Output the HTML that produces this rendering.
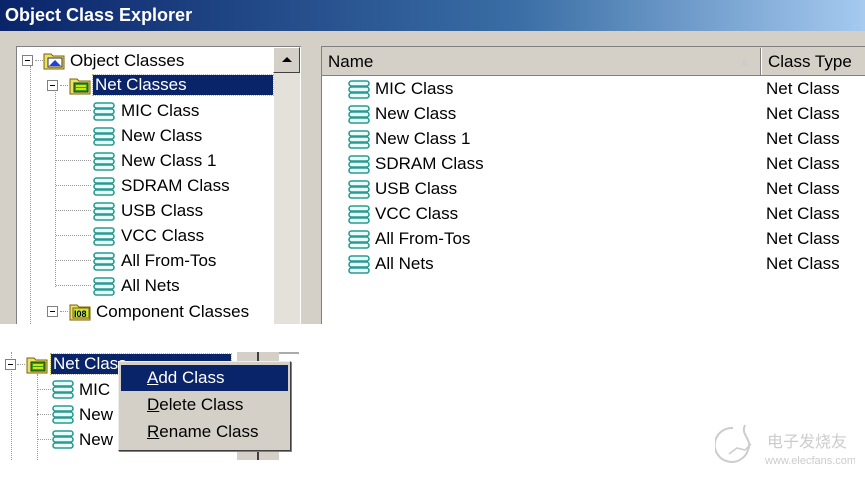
<!DOCTYPE html>
<html><head><meta charset="utf-8"><style>
*{margin:0;padding:0;box-sizing:border-box}
body{width:865px;height:477px;background:#fff;position:relative;overflow:hidden;font-family:"Liberation Sans",sans-serif;font-size:17px;color:#000}
.abs{position:absolute}
.title{left:0;top:0;width:865px;height:31px;background:linear-gradient(90deg,#0a246a 0%,#3a6ea5 60%,#a6caf0 100%);color:#fff;font-weight:bold;font-size:18px;padding:5px 0 0 5px}
.gray{left:0;top:31px;width:865px;height:293px;background:#d4d0c8}
.tree{left:16px;top:46px;width:285px;height:278px;background:#fff;border-top:1px solid #808080;border-left:1px solid #808080}
.sb{left:273px;top:47px;width:27px;height:277px;background:#e4e1db;border-left:1px solid #fff}
.sbtn{left:273px;top:47px;width:27px;height:26px;background:#d4d0c8;border:1px solid;border-color:#fff #404040 #404040 #fff}
.list{left:321px;top:46px;width:544px;height:278px;background:#fff;border-top:1px solid #808080;border-left:1px solid #808080}
.hdr{left:322px;top:47px;width:543px;height:29px;background:#d4d0c8;border-bottom:1px solid #808080}
.t{position:absolute;white-space:nowrap;line-height:20px}
.pm{position:absolute;width:11px;height:11px;border:1px solid #808080;background:#fff}
.pm:after{content:"";position:absolute;left:2px;top:4px;width:5px;height:1px;background:#000}
.dv{position:absolute;border-left:1px dotted #999}
.dh{position:absolute;border-top:1px dotted #999}
.sel{background:#0a246a;color:#fff;outline:1px dotted #c8c040}
.menu{left:118px;top:361px;width:173px;height:90px;background:#d4d0c8;border:1px solid;border-color:#eee #404040 #404040 #eee;box-shadow:1px 1px 0 #808080}
</style></head><body>
<svg width="0" height="0" style="position:absolute"><defs>
<g id="n"><rect x="1" y="1" width="20" height="5" rx="2.5" fill="#e8fbf8" stroke="#2a9a90" stroke-width="1.6"/><rect x="1" y="7" width="20" height="5" rx="2.5" fill="#e8fbf8" stroke="#2a9a90" stroke-width="1.6"/><rect x="1" y="13" width="20" height="5" rx="2.5" fill="#e8fbf8" stroke="#2a9a90" stroke-width="1.6"/></g>
<g id="f"><path d="M1 4h7l2 2h11v13H1z" fill="#e8e070" stroke="#806000"/><rect x="5" y="8" width="14" height="9" fill="#3a9a20" stroke="#104000"/><path d="M7 11h10M7 14h10" stroke="#ff0" stroke-width="1.5"/></g>
</defs></svg>
<div class="abs title">Object Class Explorer</div>
<div class="abs gray"></div>
<div class="abs tree"></div>
<div class="abs sb"></div>
<div class="abs sbtn"><div style="position:absolute;left:8px;top:9px;width:0;height:0;border-left:5px solid transparent;border-right:5px solid transparent;border-bottom:5px solid #000"></div></div>
<div class="abs list"></div>
<div class="abs hdr"><div class="t" style="left:6px;top:5px">Name</div><div class="t" style="left:416px;top:5px;color:#ccc;font-size:13px">▲</div><div style="position:absolute;left:438px;top:1px;width:2px;height:27px;border-left:1px solid #808080;border-right:1px solid #fff"></div><div class="t" style="left:446px;top:5px">Class Type</div></div>

<!-- tree top -->
<div class="dv" style="left:30px;top:66px;height:258px"></div>
<div class="dv" style="left:55px;top:92px;height:195px"></div>
<div class="pm" style="left:22px;top:55px"></div>
<div class="dh" style="left:35px;top:60px;width:8px"></div>
<svg class="abs" style="left:43px;top:50px" width="22" height="20"><path d="M1 4h7l2 2h11v13H1z" fill="#e8e070" stroke="#806000"/><rect x="5" y="8" width="14" height="9" fill="#fff" stroke="#333"/><path d="M6 16l6-6 6 6z" fill="#2040e0"/></svg>
<div class="t" style="left:70px;top:51px">Object Classes</div>
<div class="pm" style="left:47px;top:80px"></div>
<div class="dh" style="left:60px;top:85px;width:8px"></div>
<svg class="abs" style="left:69px;top:75px" width="22" height="20"><use href="#f"/></svg>
<div class="t sel" style="left:93px;top:75px;width:180px;padding-left:2px">Net Classes</div>
<div class="pm" style="left:47px;top:306px"></div>
<div class="dh" style="left:60px;top:311px;width:8px"></div>
<svg class="abs" style="left:69px;top:301px" width="22" height="20"><path d="M1 4h7l2 2h11v13H1z" fill="#e8e070" stroke="#806000"/><rect x="4" y="7" width="16" height="10" fill="#c8e840" stroke="#806000"/><text x="5" y="16" font-size="9" font-family="Liberation Sans" font-weight="bold" fill="#000">I08</text></svg>
<div class="t" style="left:96px;top:302px">Component Classes</div>

<!-- tree items -->
<div id="ti"></div>
<div id="li"></div>

<!-- bottom crop -->
<div class="abs" style="left:236px;top:352px;width:22px;height:108px;background:#d4d0c8;border-left:1px solid #fff"></div>
<div class="abs" style="left:257px;top:352px;width:2px;height:108px;background:#404040"></div>
<div class="abs" style="left:259px;top:352px;width:20px;height:108px;background:#d4d0c8"></div>
<div class="abs" style="left:279px;top:352px;width:20px;height:2px;background:#aaa"></div>
<div class="dv" style="left:11px;top:352px;height:108px"></div>
<div class="dv" style="left:37px;top:374px;height:86px"></div>
<div class="pm" style="left:5px;top:359px"></div>
<div class="dh" style="left:17px;top:364px;width:8px"></div>
<svg class="abs" style="left:26px;top:354px" width="22" height="20"><use href="#f"/></svg>
<div class="t sel" style="left:51px;top:354px;width:180px;padding-left:2px">Net Class</div>
<div class="dh" style="left:37px;top:389px;width:14px"></div>
<svg class="abs" style="left:52px;top:380px" width="22" height="20"><use href="#n"/></svg>
<div class="t" style="left:79px;top:380px">MIC</div>
<div class="dh" style="left:37px;top:414px;width:14px"></div>
<svg class="abs" style="left:52px;top:405px" width="22" height="20"><use href="#n"/></svg>
<div class="t" style="left:79px;top:405px">New</div>
<div class="dh" style="left:37px;top:439px;width:14px"></div>
<svg class="abs" style="left:52px;top:430px" width="22" height="20"><use href="#n"/></svg>
<div class="t" style="left:79px;top:430px">New</div>
<div class="abs menu">
<div class="t" style="left:2px;top:3px;width:167px;height:26px;background:#0a246a;color:#fff;padding:3px 0 0 26px"><u>A</u>dd Class</div>
<div class="t" style="left:28px;top:33px"><u>D</u>elete Class</div>
<div class="t" style="left:28px;top:60px"><u>R</u>ename Class</div>
</div>

<!-- watermark -->
<svg class="abs" style="left:715px;top:420px" width="140" height="50"><path d="M30 5c-5 10 8 14 3 25a17 17 0 1 1-15-22" fill="none" stroke="#ccc" stroke-width="2"/><path d="M14 34l8-6 8 2 6-6" fill="none" stroke="#ccc" stroke-width="1.5"/>
<text x="52" y="27" font-size="16" font-family="Noto Sans CJK SC,sans-serif" fill="#ccc">电子发烧友</text>
<text x="50" y="44" font-size="11" font-family="Liberation Sans,sans-serif" fill="#ccc">www.elecfans.com</text></svg>

<script>
var names=["MIC Class","New Class","New Class 1","SDRAM Class","USB Class","VCC Class","All From-Tos","All Nets"];
var h="",l="";
names.forEach(function(n,i){
 var y=101+i*25;
 h+='<div class="dh" style="left:56px;top:'+(y+9)+'px;width:35px"></div>';
 h+='<svg class="abs" style="left:93px;top:'+(y+1)+'px" width="22" height="20"><use href="#n"/></svg>';
 h+='<div class="t" style="left:121px;top:'+y+'px">'+n+'</div>';
 var z=79+i*25;
 l+='<svg class="abs" style="left:348px;top:'+(z+1)+'px" width="22" height="20"><use href="#n"/></svg>';
 l+='<div class="t" style="left:375px;top:'+z+'px">'+n+'</div>';
 l+='<div class="t" style="left:766px;top:'+z+'px">Net Class</div>';
});
document.getElementById("ti").outerHTML=h;
document.getElementById("li").outerHTML=l;
</script>
</body></html>
